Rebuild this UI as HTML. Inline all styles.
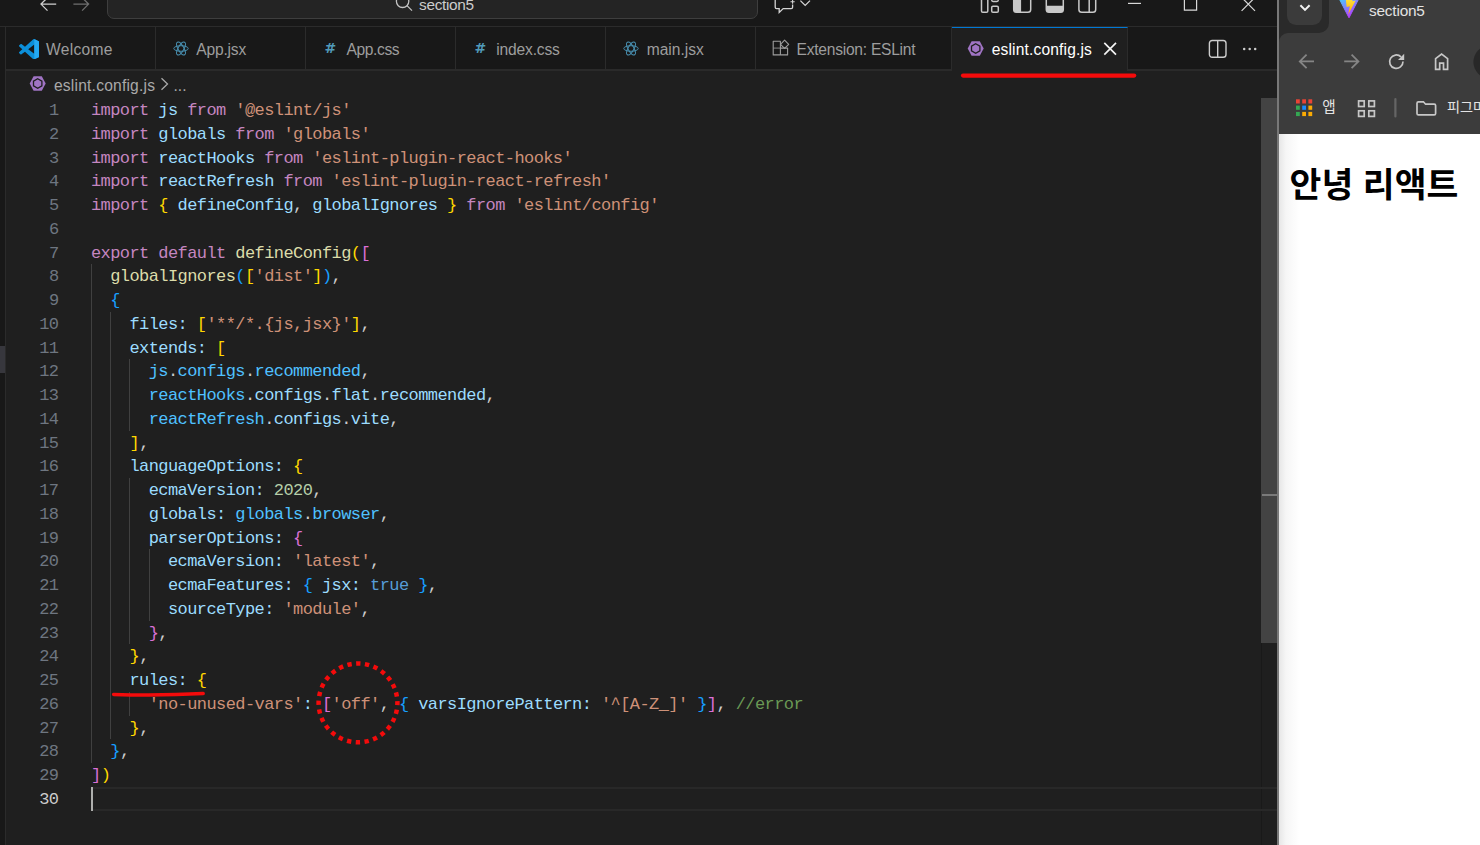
<!DOCTYPE html>
<html lang="ko">
<head>
<meta charset="utf-8">
<title>eslint.config.js</title>
<style>
html,body{margin:0;padding:0;}
body{width:1480px;height:845px;overflow:hidden;background:#1f1f1f;position:relative;
  font-family:"Liberation Sans","Noto Sans CJK KR",sans-serif;}
.abs{position:absolute;}
#vsc{position:absolute;left:0;top:0;width:1277px;height:845px;background:#1f1f1f;overflow:hidden;}
#titlebar{position:absolute;left:0;top:0;width:1277px;height:26px;background:#181818;border-bottom:1px solid #2b2b2b;overflow:hidden;}
#cmd{position:absolute;left:107px;top:-12px;width:649px;height:29px;background:#242424;border:1px solid #3e3e3e;border-radius:7px;}
#cmdtxt{left:419px;top:-4.7px;letter-spacing:-0.31px;font-size:15.4px;line-height:20px;color:#cccccc;white-space:nowrap;}
#leftstrip{position:absolute;left:0;top:27px;width:5px;height:818px;background:#181818;border-right:1px solid #2b2b2b;}
#leftmark{position:absolute;left:0;top:346px;width:5px;height:27px;background:#37373d;}
#tabbar{position:absolute;left:6px;top:27px;width:1271px;height:42px;background:#181818;border-bottom:2px solid #2a2a2a;}
.tab{position:absolute;top:0;height:42px;border-right:1px solid #2b2b2b;box-sizing:border-box;}
.tab .lbl{position:absolute;top:13px;font-size:15.6px;line-height:20px;color:#9d9d9d;white-space:nowrap;transform-origin:0 50%;}
.tab .hash{position:absolute;top:11px;font-family:"DejaVu Sans",sans-serif;font-size:14px;line-height:20px;font-weight:bold;color:#519aba;}
.tab.active{background:#1f1f1f;border-top:1.25px solid #0078d4;height:44px;}
.tab.active .lbl{color:#ffffff;top:12px;}
#crumbs{position:absolute;left:6px;top:71px;width:1255px;height:28px;background:#1f1f1f;}
#crumbs .lbl{position:absolute;top:5px;font-size:15.6px;line-height:20px;color:#a9a9a9;white-space:nowrap;transform-origin:0 50%;}
#editor{position:absolute;left:6px;top:98px;width:1255px;height:747px;background:#1f1f1f;}
.ln{position:absolute;left:0;width:1255px;height:25px;line-height:25px;font-family:"Liberation Mono",monospace;font-size:17px;letter-spacing:-0.58px;white-space:pre;color:#cccccc;}
.ln .n{position:absolute;left:0;width:52.5px;text-align:right;color:#6e7681;}
.ln .c{position:absolute;left:85px;}
.k{color:#c586c0}.v{color:#9cdcfe}.s{color:#ce9178}.f{color:#dcdcaa}.m{color:#b5cea8}.b{color:#569cd6}.cm{color:#6a9955}.cv{color:#4fc1ff}
.b1{color:#ffd700}.b2{color:#da70d6}.b3{color:#179fff}
.guide{position:absolute;width:1px;background:#404040;}
#curline{position:absolute;left:91px;top:787px;width:1186px;height:24px;box-sizing:border-box;border-top:2px solid #282828;border-bottom:2px solid #282828;}
#cursor{position:absolute;left:91px;top:787px;width:2px;height:24px;background:#aeafad;}
#scroll{position:absolute;left:1261px;top:98px;width:16px;height:747px;background:#1f1f1f;border-left:1px solid #191919;box-sizing:border-box;}
#slider{position:absolute;left:1261px;top:98px;width:16px;height:545px;background:#434343;}
#tick{position:absolute;left:1262px;top:494px;width:15px;height:2px;background:#7a7a7a;}
#divider{position:absolute;left:1277px;top:0;width:2px;height:845px;background:#787878;}
#chrome{position:absolute;left:1279px;top:0;width:201px;height:845px;background:#ffffff;overflow:hidden;}
#tabtxt{left:90px;top:0.9px;letter-spacing:-0.2px;font-size:15.4px;line-height:20px;color:#e3e3e3;white-space:nowrap;}
#bm1{left:43.2px;top:96.8px;font-size:14.6px;line-height:20px;color:#e3e3e3;white-space:nowrap;}
#bm2{left:168px;top:96.6px;font-size:14.2px;line-height:20px;color:#e3e3e3;white-space:nowrap;}
#h1{left:10.6px;top:159.8px;margin:0;font-size:34.6px;line-height:50px;font-weight:bold;color:#000;white-space:nowrap;font-family:"Liberation Sans","Noto Sans CJK KR",sans-serif;}
</style>
</head>
<body>
<div id="vsc">
  <div id="titlebar">
<svg class="abs" style="left:38px;top:-4px" width="56" height="18" viewBox="38 -4 56 18"><g fill="none" stroke-width="1.3" stroke-linejoin="miter"><path d="M56.2 4.1H41.3M47.5 -2.4L41 4.1l6.5 6.5" stroke="#d0d0d0"/><path d="M73.4 4.1H88.3M82.1 -2.4L88.6 4.1l-6.5 6.5" stroke="#6f6f6f"/></g></svg>
<div id="cmd"></div>
<svg class="abs" style="left:394px;top:-6px" width="22" height="20" viewBox="394 -6 22 20"><g fill="none" stroke="#c4c4c4" stroke-width="1.3"><circle cx="402.6" cy="1.3" r="6.2"/><path d="M407 5.6L412 10.6"/></g></svg>
<span class="abs" id="cmdtxt">section5</span>
<svg class="abs" style="left:772px;top:-4px" width="42" height="20" viewBox="772 -4 42 20"><g fill="none" stroke="#d4d4d4" stroke-width="1.3"><path d="M775.2 -3V7.2a1.4 1.4 0 0 0 1.4 1.4h2.6V12.4l4-3.8h8a1.4 1.4 0 0 0 1.4-1.4V4.6"/><path d="M792.6 -0.4v4.2M790.5 1.7h4.2" stroke-width="1.1"/><path d="M800.4 0.6L805.2 5.4 810 0.6"/></g></svg>
<svg class="abs" style="left:978px;top:-6px" width="124" height="22" viewBox="978 -6 124 22"><g fill="none" stroke="#c8c8c8" stroke-width="1.5">
<rect x="981.5" y="-4" width="6.3" height="16.2" rx="1.3"/><rect x="991.7" y="-4" width="6.6" height="5.4" rx="1.3"/><rect x="991.7" y="6.2" width="6.6" height="6" rx="1.3"/>
<rect x="1013.7" y="-6" width="17" height="18.2" rx="2.8"/><path d="M1013.7 -6h7.4v18.2h-4.6a2.8 2.8 0 0 1-2.8-2.8z" fill="#c8c8c8" stroke="none"/>
<rect x="1046.3" y="-6" width="17" height="18.2" rx="2.8"/><path d="M1046.3 5.8h17v3.6a2.8 2.8 0 0 1-2.8 2.8h-11.4a2.8 2.8 0 0 1-2.8-2.8z" fill="#c8c8c8" stroke="none"/>
<rect x="1078.9" y="-6" width="16.8" height="18.2" rx="2.8"/><path d="M1089.2 -6v18.2"/>
</g></svg>
<svg class="abs" style="left:1120px;top:-4px" width="140" height="18" viewBox="1120 -4 140 18"><g fill="none" stroke="#d8d8d8" stroke-width="1.2"><path d="M1128 3.4h13"/><path d="M1184.4 -4V10.2H1196.6V-4"/><path d="M1241.6 -2.6L1255 10.9M1255 -2.6L1241.6 10.9"/></g></svg>

  </div>
  <div id="leftstrip"></div><div id="leftmark"></div>
  <div id="tabbar">
<div class="tab" style="left:0;width:150px">
  <svg class="abs" style="left:12.9px;top:11.9px" width="20.4" height="20.4" viewBox="0 0 24 24"><path fill="#0c8fd9" d="M23.15 2.587L18.21.21a1.494 1.494 0 0 0-1.705.29l-9.46 8.63-4.12-3.128a.999.999 0 0 0-1.276.057L.327 7.261A1 1 0 0 0 .326 8.74L3.899 12 .326 15.26a1 1 0 0 0 .001 1.479L1.65 17.94a.999.999 0 0 0 1.276.057l4.12-3.128 9.46 8.63a1.492 1.492 0 0 0 1.704.29l4.942-2.377A1.5 1.5 0 0 0 24 20.06V3.939a1.5 1.5 0 0 0-.85-1.352zm-5.146 14.861L10.826 12l7.178-5.448v10.896z"/><path fill="#24a9f3" d="M18.004 0.1 L23.15 2.587A1.5 1.5 0 0 1 24 3.939V20.06a1.5 1.5 0 0 1-.85 1.352L18.004 23.9 Z"/></svg>
  <span class="lbl" style="left:40px;letter-spacing:0.27px">Welcome</span>
</div>
<div class="tab" style="left:150px;width:150px">
  <svg class="abs ric" style="left:16.5px;top:13.5px" width="16" height="15" viewBox="-8 -7.5 16 15"><g fill="none" stroke="#4a93b5" stroke-width="0.95"><ellipse rx="7.2" ry="2.8"/><ellipse rx="7.2" ry="2.8" transform="rotate(60)"/><ellipse rx="7.2" ry="2.8" transform="rotate(120)"/></g></svg>
  <span class="lbl" style="left:40.3px;letter-spacing:-0.2px">App.jsx</span>
</div>
<div class="tab" style="left:300px;width:150px">
  <span class="hash" style="left:18.5px">#</span>
  <span class="lbl" style="left:40.5px;letter-spacing:-0.4px">App.css</span>
</div>
<div class="tab" style="left:450px;width:150px">
  <span class="hash" style="left:18.5px">#</span>
  <span class="lbl" style="left:40.3px;letter-spacing:-0.19px">index.css</span>
</div>
<div class="tab" style="left:600px;width:150px">
  <svg class="abs ric" style="left:16.5px;top:13.5px" width="16" height="15" viewBox="-8 -7.5 16 15"><g fill="none" stroke="#4a93b5" stroke-width="0.95"><ellipse rx="7.2" ry="2.8"/><ellipse rx="7.2" ry="2.8" transform="rotate(60)"/><ellipse rx="7.2" ry="2.8" transform="rotate(120)"/></g></svg>
  <span class="lbl" style="left:40.7px;letter-spacing:0px">main.jsx</span>
</div>
<div class="tab" style="left:750px;width:196px">
  <svg class="abs" style="left:16px;top:12px" width="18" height="17" viewBox="772 39 18 17"><g fill="none" stroke="#9d9d9d" stroke-width="1.1" stroke-linejoin="round"><path d="M773.2 41.2h7.2v13.7h-7.2zM780.4 48.1h7.2v6.8h-7.2"/><path d="M773.2 48.1h7.2" stroke-opacity=".75"/><path d="M784.6 40.2l4.1 4.1-4.1 4.1-4.1-4.1z"/></g></svg>
  <span class="lbl" style="left:40.5px;letter-spacing:-0.25px">Extension: ESLint</span>
</div>
<div class="tab active" style="left:946px;width:176px">
  <svg class="abs" style="left:15.1px;top:12.6px" width="17.4" height="15" viewBox="-8.7 -7.5 17.4 15"><path fill="#a074c4" d="M-8 0L-4.1-7.2H4.1L8 0 4.1 7.2H-4.1Z"/><path fill="#a074c4" stroke="#1f1f1f" stroke-width="1.3" d="M0-4.8L4.2 -2.4V2.4L0 4.8-4.2 2.4V-2.4Z"/></svg>
  <span class="lbl" style="left:39.7px;letter-spacing:0.15px">eslint.config.js</span>
  <svg class="abs" style="left:151px;top:14.3px" width="14" height="14" viewBox="0 0 14 14"><path d="M1.3 0.9L13 12.6M13 0.9L1.3 12.6" stroke="#f4f4f4" stroke-width="1.7" fill="none"/></svg>
</div>
<svg class="abs" style="left:1201.6px;top:12px" width="20" height="20" viewBox="0 0 20 20"><g fill="none" stroke="#cccccc" stroke-width="1.4"><rect x="1.4" y="1.5" width="16.6" height="16.8" rx="2.8"/><path d="M9.7 1.5v16.8"/></g></svg>
<svg class="abs" style="left:1236px;top:19px" width="16" height="6" viewBox="0 0 16 6"><g fill="#cccccc"><circle cx="2.2" cy="3" r="1.25"/><circle cx="7.7" cy="3" r="1.25"/><circle cx="13.2" cy="3" r="1.25"/></g></svg>

  </div>
  <div id="crumbs">
<svg class="abs" style="left:22.9px;top:5.2px" width="17.4" height="15" viewBox="-8.7 -7.5 17.4 15"><path fill="#a074c4" d="M-8 0L-4.1-7.2H4.1L8 0 4.1 7.2H-4.1Z"/><path fill="#a074c4" stroke="#1f1f1f" stroke-width="1.3" d="M0-4.8L4.2 -2.4V2.4L0 4.8-4.2 2.4V-2.4Z"/></svg>
<span class="lbl" style="left:48px;letter-spacing:0.2px">eslint.config.js</span>
<svg class="abs" style="left:153.5px;top:6px" width="9" height="14" viewBox="0 0 9 14"><path d="M1.5 1.2L7.5 7 1.5 12.8" fill="none" stroke="#a9a9a9" stroke-width="1.3"/></svg>
<span class="lbl" style="left:167.5px">...</span>

  </div>
  <div id="editor">
<div class="ln" style="top:0px"><span class="n">1</span><span class="c"><span class="k">import</span> <span class="v">js</span> <span class="k">from</span> <span class="s">&#x27;@eslint/js&#x27;</span></span></div>
<div class="ln" style="top:24px"><span class="n">2</span><span class="c"><span class="k">import</span> <span class="v">globals</span> <span class="k">from</span> <span class="s">&#x27;globals&#x27;</span></span></div>
<div class="ln" style="top:48px"><span class="n">3</span><span class="c"><span class="k">import</span> <span class="v">reactHooks</span> <span class="k">from</span> <span class="s">&#x27;eslint-plugin-react-hooks&#x27;</span></span></div>
<div class="ln" style="top:71px"><span class="n">4</span><span class="c"><span class="k">import</span> <span class="v">reactRefresh</span> <span class="k">from</span> <span class="s">&#x27;eslint-plugin-react-refresh&#x27;</span></span></div>
<div class="ln" style="top:95px"><span class="n">5</span><span class="c"><span class="k">import</span> <span class="b1">{</span> <span class="v">defineConfig</span>, <span class="v">globalIgnores</span> <span class="b1">}</span> <span class="k">from</span> <span class="s">&#x27;eslint/config&#x27;</span></span></div>
<div class="ln" style="top:119px"><span class="n">6</span><span class="c"></span></div>
<div class="ln" style="top:143px"><span class="n">7</span><span class="c"><span class="k">export</span> <span class="k">default</span> <span class="f">defineConfig</span><span class="b1">(</span><span class="b2">[</span></span></div>
<div class="ln" style="top:166px"><span class="n">8</span><span class="c">  <span class="f">globalIgnores</span><span class="b3">(</span><span class="b1">[</span><span class="s">&#x27;dist&#x27;</span><span class="b1">]</span><span class="b3">)</span>,</span></div>
<div class="ln" style="top:190px"><span class="n">9</span><span class="c">  <span class="b3">{</span></span></div>
<div class="ln" style="top:214px"><span class="n">10</span><span class="c">    <span class="v">files</span><span class="v">:</span> <span class="b1">[</span><span class="s">&#x27;**/*.{js,jsx}&#x27;</span><span class="b1">]</span>,</span></div>
<div class="ln" style="top:238px"><span class="n">11</span><span class="c">    <span class="v">extends</span><span class="v">:</span> <span class="b1">[</span></span></div>
<div class="ln" style="top:261px"><span class="n">12</span><span class="c">      <span class="cv">js</span>.<span class="cv">configs</span>.<span class="cv">recommended</span>,</span></div>
<div class="ln" style="top:285px"><span class="n">13</span><span class="c">      <span class="cv">reactHooks</span>.<span class="v">configs</span>.<span class="v">flat</span>.<span class="v">recommended</span>,</span></div>
<div class="ln" style="top:309px"><span class="n">14</span><span class="c">      <span class="cv">reactRefresh</span>.<span class="v">configs</span>.<span class="v">vite</span>,</span></div>
<div class="ln" style="top:333px"><span class="n">15</span><span class="c">    <span class="b1">]</span>,</span></div>
<div class="ln" style="top:356px"><span class="n">16</span><span class="c">    <span class="v">languageOptions</span><span class="v">:</span> <span class="b1">{</span></span></div>
<div class="ln" style="top:380px"><span class="n">17</span><span class="c">      <span class="v">ecmaVersion</span><span class="v">:</span> <span class="m">2020</span>,</span></div>
<div class="ln" style="top:404px"><span class="n">18</span><span class="c">      <span class="v">globals</span><span class="v">:</span> <span class="cv">globals</span>.<span class="cv">browser</span>,</span></div>
<div class="ln" style="top:428px"><span class="n">19</span><span class="c">      <span class="v">parserOptions</span><span class="v">:</span> <span class="b2">{</span></span></div>
<div class="ln" style="top:451px"><span class="n">20</span><span class="c">        <span class="v">ecmaVersion</span><span class="v">:</span> <span class="s">&#x27;latest&#x27;</span>,</span></div>
<div class="ln" style="top:475px"><span class="n">21</span><span class="c">        <span class="v">ecmaFeatures</span><span class="v">:</span> <span class="b3">{</span> <span class="v">jsx</span><span class="v">:</span> <span class="b">true</span> <span class="b3">}</span>,</span></div>
<div class="ln" style="top:499px"><span class="n">22</span><span class="c">        <span class="v">sourceType</span><span class="v">:</span> <span class="s">&#x27;module&#x27;</span>,</span></div>
<div class="ln" style="top:523px"><span class="n">23</span><span class="c">      <span class="b2">}</span>,</span></div>
<div class="ln" style="top:546px"><span class="n">24</span><span class="c">    <span class="b1">}</span>,</span></div>
<div class="ln" style="top:570px"><span class="n">25</span><span class="c">    <span class="v">rules</span><span class="v">:</span> <span class="b1">{</span></span></div>
<div class="ln" style="top:594px"><span class="n">26</span><span class="c">      <span class="s">&#x27;no-unused-vars&#x27;</span><span class="v">:</span> <span class="b2">[</span><span class="s">&#x27;off&#x27;</span>, <span class="b3">{</span> <span class="v">varsIgnorePattern</span><span class="v">:</span> <span class="s">&#x27;^[A-Z_]&#x27;</span> <span class="b3">}</span><span class="b2">]</span>, <span class="cm">//error</span></span></div>
<div class="ln" style="top:618px"><span class="n">27</span><span class="c">    <span class="b1">}</span>,</span></div>
<div class="ln" style="top:641px"><span class="n">28</span><span class="c">  <span class="b3">}</span>,</span></div>
<div class="ln" style="top:665px"><span class="n">29</span><span class="c"><span class="b2">]</span><span class="b1">)</span></span></div>
<div class="ln" style="top:689px"><span class="n" style="color:#cccccc">30</span><span class="c"></span></div>
<div class="guide" style="left:85px;top:166px;height:499px"></div>
<div class="guide" style="left:104.2px;top:214px;height:427px"></div>
<div class="guide" style="left:123.4px;top:261px;height:72px"></div>
<div class="guide" style="left:123.4px;top:380px;height:166px"></div>
<div class="guide" style="left:123.4px;top:594px;height:24px"></div>
<div class="guide" style="left:142.6px;top:451px;height:72px"></div>
  </div>
  <div id="scroll"></div><div id="slider"></div><div id="tick"></div>
  <div id="curline"></div><div id="cursor"></div>
</div>
<div id="divider"></div>
<div id="chrome">
<div class="abs" style="left:0;top:0;width:201px;height:133.5px;background:#3c3c3c"></div>
<svg class="abs" style="left:0;top:0" width="201" height="134" viewBox="1279 0 201 134">
<defs><linearGradient id="vg" x1="0.1" y1="0" x2="0.65" y2="0.95"><stop offset="0" stop-color="#41d1ff"/><stop offset="1" stop-color="#bd34fe"/></linearGradient>
<linearGradient id="vy" x1="0" y1="0" x2="0" y2="1"><stop offset="0" stop-color="#ffea83"/><stop offset=".3" stop-color="#ffdd35"/><stop offset="1" stop-color="#ffa800"/></linearGradient></defs>
<path d="M1279 0H1329V23a10 10 0 0 1-10 10H1288a9 9 0 0 0-9 9Z" fill="#2a2a2a"/>
<rect x="1287" y="-10" width="35" height="35" rx="9" fill="#3b3b3b"/>
<path d="M1300.4 5.3L1305 9.9l4.6-4.6" fill="none" stroke="#f2f2f2" stroke-width="2"/>
<path d="M1338.6 -2.5L1349 17.8L1359.4 -2.5Z" fill="url(#vg)" stroke="url(#vg)" stroke-width="1" stroke-linejoin="round"/>
<path d="M1345.3 -6h8.9l-1.9 7.3 3.4-.7-7.5 13.8 1.6-8.2-3.2 .7Z" fill="url(#vy)"/>
<g fill="none" stroke="#858585" stroke-width="1.8"><path d="M1314 61.4H1300.4M1306.6 54.6l-6.8 6.8 6.8 6.8"/><path d="M1344.2 61.4H1357.8M1351.6 54.6l6.8 6.8-6.8 6.8"/></g>
<g fill="none" stroke="#c7c7c7" stroke-width="1.7"><path d="M1403 61.6a6.7 6.7 0 1 1-2-4.7"/><path d="M1404.2 53.8v6.2h-6.2z" fill="#c7c7c7" stroke="none"/>
<path d="M1435.6 69.4V58.6L1441.6 54l6 4.6V69.4h-4.1v-6.2h-3.8v6.2z" stroke-linejoin="miter"/></g>
<circle cx="1490" cy="62" r="16.6" fill="#282828"/>
<g><rect x="1296" y="99.3" width="3.8" height="4.2" fill="#ea4335"/><rect x="1302.2" y="99.3" width="3.8" height="4.2" fill="#ea4335"/><rect x="1308.4" y="99.3" width="3.8" height="4.2" fill="#ea4335"/>
<rect x="1296" y="105.6" width="3.8" height="4.2" fill="#34a853"/><rect x="1302.2" y="105.6" width="3.8" height="4.2" fill="#1a8cff"/><rect x="1308.4" y="105.6" width="3.8" height="4.2" fill="#fbab04"/>
<rect x="1296" y="111.9" width="3.8" height="4.2" fill="#34a853"/><rect x="1302.2" y="111.9" width="3.8" height="4.2" fill="#fbab04"/><rect x="1308.4" y="111.9" width="3.8" height="4.2" fill="#fbab04"/></g>
<g fill="none" stroke="#c7c7c7" stroke-width="1.7"><rect x="1358.6" y="100.9" width="5.6" height="5.6"/><rect x="1368.8" y="100.9" width="5.6" height="5.6"/><rect x="1358.6" y="110.8" width="5.6" height="5.6"/><rect x="1368.8" y="110.8" width="5.6" height="5.6"/>
<path d="M1417 103.2a1.4 1.4 0 0 1 1.4-1.4h5l2.2 2.4h8.6a1.4 1.4 0 0 1 1.4 1.4v7.8a1.4 1.4 0 0 1-1.4 1.4h-15.8a1.4 1.4 0 0 1-1.4-1.4z"/></g>
<rect x="1394.3" y="98" width="2.2" height="19.6" rx="1.1" fill="#656565"/>
</svg>
<span class="abs" id="tabtxt">section5</span>
<span class="abs" id="bm1">앱</span>
<span class="abs" id="bm2">피그마</span>
<div class="abs" style="left:0;top:133.5px;width:201px;height:712px;background:linear-gradient(90deg,#e6e6e6 0,#f6f6f6 7px,#ffffff 20px)"></div>
<h1 class="abs" id="h1">안녕 리액트</h1>

</div>
<svg class="abs" style="left:0;top:0;pointer-events:none" width="1480" height="845" viewBox="0 0 1480 845"><g fill="none" stroke="#f40b0b" stroke-linecap="round">
<path d="M963 75.6H1134.2" stroke-width="4.2"/>
<path d="M113.6 694.4Q160 695.8 203.2 693.5" stroke-width="3.5"/>
<circle cx="358" cy="702.9" r="39.4" stroke-width="4.5" stroke-dasharray="4.4 4.4414" stroke-dashoffset="2.2" stroke-linecap="butt"/>
</g></svg>

</body>
</html>
